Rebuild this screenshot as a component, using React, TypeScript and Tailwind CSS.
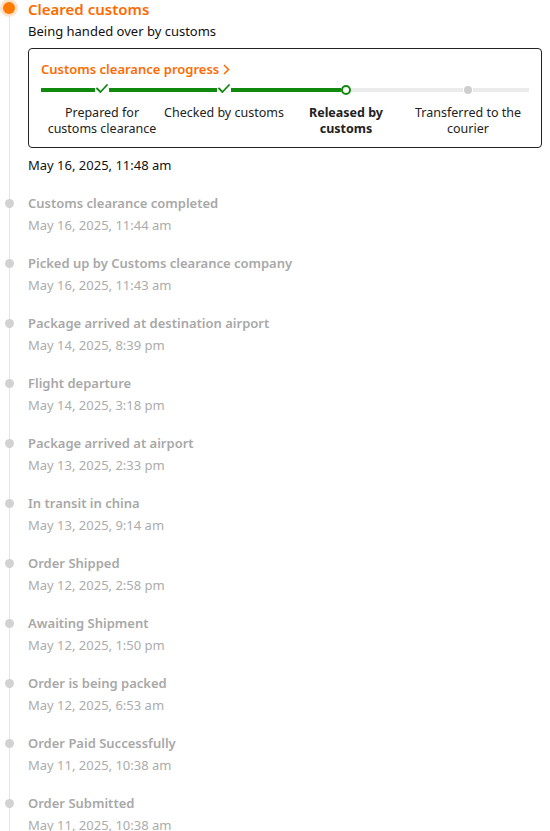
import React from 'react';

const events = [
  { title: 'Customs clearance completed', time: 'May 16, 2025, 11:44 am' },
  { title: 'Picked up by Customs clearance company', time: 'May 16, 2025, 11:43 am' },
  { title: 'Package arrived at destination airport', time: 'May 14, 2025, 8:39 pm' },
  { title: 'Flight departure', time: 'May 14, 2025, 3:18 pm' },
  { title: 'Package arrived at airport', time: 'May 13, 2025, 2:33 pm' },
  { title: 'In transit in china', time: 'May 13, 2025, 9:14 am' },
  { title: 'Order Shipped', time: 'May 12, 2025, 2:58 pm' },
  { title: 'Awaiting Shipment', time: 'May 12, 2025, 1:50 pm' },
  { title: 'Order is being packed', time: 'May 12, 2025, 6:53 am' },
  { title: 'Order Paid Successfully', time: 'May 11, 2025, 10:38 am' },
  { title: 'Order Submitted', time: 'May 11, 2025, 10:38 am' },
];

const steps = [
  { label: ['Prepared for', 'customs clearance'], state: 'done' },
  { label: ['Checked by customs'], state: 'done' },
  { label: ['Released by', 'customs'], state: 'current' },
  { label: ['Transferred to the', 'courier'], state: 'todo' },
];

const Check = () => (
  <svg width="12" height="10" viewBox="0 0 12 10" fill="none" className="-mt-[3px]">
    <path d="M1 4.5 L4.5 8 L11 1" stroke="#0f8a0f" strokeWidth="1.8" strokeLinecap="round" strokeLinejoin="round" />
  </svg>
);

const Progress: React.FC = () => (
  <div className="mt-[6px] border border-[#222] rounded-[4px] px-[12px] pt-[11px] pb-[10px]">
    <div className="flex items-center gap-[4px] h-[18px] text-[13px] font-semibold text-[#ff6a00] leading-[18px]">
      Customs clearance progress
      <svg width="7" height="11" viewBox="0 0 7 11" fill="none">
        <path d="M1 1 L5.5 5.5 L1 10" stroke="#ff6a00" strokeWidth="1.5" />
      </svg>
    </div>
    <div className="mt-[6px] flex">
      {steps.map((s, i) => {
        const leftGreen = s.state !== 'todo';
        const rightGreen = s.state === 'done';
        return (
          <div key={i} className="w-[122px] flex flex-col items-center">
            <div className="w-full h-[12px] flex items-center">
              <div className={`flex-1 h-[4px] ${leftGreen ? 'bg-[#0f8a0f]' : 'bg-[#ebebeb]'}`} />
              <div className={`${s.state === 'done' ? 'w-[14px]' : 'w-[10px]'} h-[12px] flex items-center justify-center`}>
                {s.state === 'done' && <Check />}
                {s.state === 'current' && (
                  <div className="w-[10px] h-[10px] shrink-0 rounded-full border-2 border-[#0f8a0f] bg-white" />
                )}
                {s.state === 'todo' && <div className="w-[8px] h-[8px] rounded-full bg-[#cfcfcf]" />}
              </div>
              <div className={`flex-1 h-[4px] ${rightGreen ? 'bg-[#0f8a0f]' : 'bg-[#ebebeb]'}`} />
            </div>
            <div
              className={`mt-[9px] text-center text-[12.5px] leading-[16px] text-[#222] ${
                s.state === 'current' ? 'font-bold' : ''
              }`}
            >
              {s.label.map((l, j) => (
                <div key={j}>{l}</div>
              ))}
            </div>
          </div>
        );
      })}
    </div>
  </div>
);

export default function App() {
  return (
    <div className="w-[550px] h-[831px] overflow-hidden bg-white" style={{ fontFamily: '"Segoe UI", "Noto Sans", "Open Sans", sans-serif' }}>
      {/* current step */}
      <div className="flex">
        <div className="w-[18px] flex flex-col items-center shrink-0">
          <div className="mt-[2px] w-[12px] h-[12px] rounded-full bg-[#ff7a00] ring-[3px] ring-[#ffe2c8]" />
          <div className="mt-[3px] w-px flex-1 bg-[#e6e6e6]" />
        </div>
        <div className="ml-[10px] mr-[8px] flex-1">
          <div className="text-[15px] leading-[18px] font-semibold text-[#ff6a00]">Cleared customs</div>
          <div className="mt-[2px] text-[13px] leading-[22px] text-[#111]">Being handed over by customs</div>
          <Progress />
          <div className="mt-[6px] text-[13px] leading-[22px] text-[#111] pb-[16px]">May 16, 2025, 11:48 am</div>
        </div>
      </div>

      {events.map((e, i) => (
        <div key={i} className="flex">
          <div className="w-[18px] flex flex-col items-center shrink-0">
            <div className="w-px h-[7px] bg-[#e6e6e6]" />
            <div className="w-[9px] h-[9px] rounded-full bg-[#d2d2d2]" />
            <div className="w-px flex-1 bg-[#e6e6e6]" />
          </div>
          <div className="ml-[10px] pb-[16px]">
            <div className="text-[13px] leading-[22px] font-semibold text-[#a8a8a8]">{e.title}</div>
            <div className="text-[13px] leading-[22px] text-[#acacac]">{e.time}</div>
          </div>
        </div>
      ))}
    </div>
  );
}
